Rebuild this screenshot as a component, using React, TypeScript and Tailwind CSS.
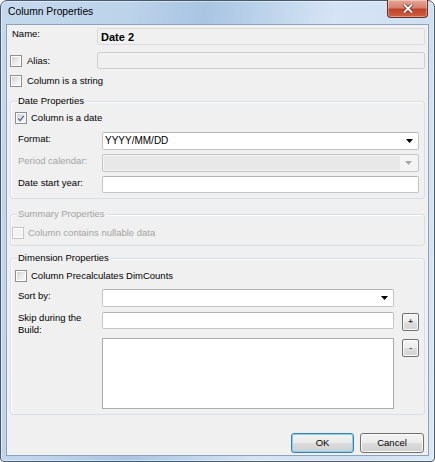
import type { ReactNode } from 'react';

const font = "font-['Liberation_Sans',Arial,sans-serif] text-[9.5px] leading-[12px]";
const label = `${font} text-black`;
const grey = `${font} text-[#a3a3a3]`;

function CheckBox({ checked = false, disabled = false }: { checked?: boolean; disabled?: boolean }) {
  return (
    <span
      className={`flex h-[12px] w-[12px] shrink-0 items-center justify-center border bg-white p-[1px] ${
        disabled ? 'border-[#c4c4c4]' : 'border-[#8e8f8f]'
      }`}
    >
      <span
        className={`relative flex h-full w-full items-center justify-center ${
          disabled ? 'bg-[#f4f4f4]' : 'bg-[linear-gradient(135deg,#cfd2d6_0%,#eeeeee_60%,#f7f7f7_100%)]'
        }`}
      >
        {checked && (
          <svg viewBox="0 0 10 10" className="h-[9px] w-[9px]">
            <path d="M1.6 5.2 L4 7.6 L8.4 1.8" fill="none" stroke="#4a5f97" strokeWidth="1.6" />
          </svg>
        )}
      </span>
    </span>
  );
}

function CheckRow({ text, checked, disabled, gap = 'gap-[4px]' }: { text: string; checked?: boolean; disabled?: boolean; gap?: string }) {
  return (
    <div className={`flex h-[12px] items-center ${gap}`}>
      <CheckBox checked={checked} disabled={disabled} />
      <span className={disabled ? grey : label}>{text}</span>
    </div>
  );
}

function Arrow({ color = '#000' }: { color?: string }) {
  return (
    <svg viewBox="0 0 7 4" className="h-[4px] w-[7px]">
      <path d="M0 0 H7 L3.5 4 Z" fill={color} />
    </svg>
  );
}

function Combo({ width, value, disabled = false }: { width: string; value?: string; disabled?: boolean }) {
  if (disabled) {
    return (
      <div className={`${width} flex h-[18px] rounded-[2px] border border-[#c6c6c6] bg-[#f4f4f4] p-[1px]`}>
        <div className="h-full flex-1 bg-[#e8e8e8]" />
        <div className="flex w-[17px] items-center justify-center">
          <Arrow color="#a9a9a9" />
        </div>
      </div>
    );
  }
  return (
    <div className={`${width} flex h-[18px] items-center rounded-[2px] border border-[#c4c4c4] border-t-[#b4b4b4] bg-white`}>
      <span className="flex-1 pl-[2px] font-['Liberation_Sans',Arial,sans-serif] text-[10px] leading-[12px] text-black">
        {value}
      </span>
      <div className="flex w-[17px] items-center justify-center">
        <Arrow />
      </div>
    </div>
  );
}

function TextBox({ width }: { width: string }) {
  return <div className={`${width} h-[17px] rounded-[2px] border border-[#c4c4c4] border-t-[#b4b4b4] bg-white`} />;
}

function Group({ title, height, disabled = false, children }: { title: string; height: string; disabled?: boolean; children: ReactNode }) {
  return (
    <div className={`relative ${height} w-[415px] rounded-[3px] border border-[#d5dfe5] shadow-[inset_1px_1px_0_#ffffff]`}>
      <span className={`absolute -top-[7px] left-[6px] bg-[#f0f0f0] px-[1px] ${disabled ? grey : label}`}>{title}</span>
      {children}
    </div>
  );
}

function SmallButton({ glyph }: { glyph: string }) {
  return (
    <div className="flex h-[18px] w-[17px] items-center justify-center rounded-[2px] border border-[#707070] bg-[linear-gradient(#f4f4f4_0%,#ececec_50%,#dedede_50%,#d2d2d2_100%)] shadow-[inset_0_0_0_1px_#fbfbfb]">
      <span className="font-['Liberation_Sans',Arial,sans-serif] text-[8px] font-bold leading-[8px] text-[#333]">{glyph}</span>
    </div>
  );
}

function DialogButton({ text, isDefault = false }: { text: string; isDefault?: boolean }) {
  return (
    <div
      className={`flex h-[20px] items-center justify-center rounded-[3px] border bg-[linear-gradient(#f2f2f2_0%,#ebebeb_50%,#dddddd_50%,#cfcfcf_100%)] ${
        isDefault
          ? 'w-[63px] border-[#3c7fb1] shadow-[inset_0_0_0_1px_#7fd3f3]'
          : 'w-[64px] border-[#707070] shadow-[inset_0_0_0_1px_#fbfbfb]'
      }`}
    >
      <span className={label}>{text}</span>
    </div>
  );
}

export default function App() {
  return (
    <div className="h-[462px] w-[435px] bg-white">
      <div className="flex h-full w-full flex-col rounded-t-[7px] rounded-b-[4px] border border-[#4b5a6b] bg-[linear-gradient(100deg,#c5d9ee_0%,#bcd3ea_25%,#a9c5e3_40%,#b9d1ea_50%,#d5e4f4_65%,#cfe0f1_85%,#dbe8f5_100%)] shadow-[inset_0_0_0_1px_rgba(255,255,255,0.45)]">
        {/* Title bar */}
        <div className="flex h-[23px] shrink-0 items-start justify-between">
          <span className="pl-[7px] pt-[5px] font-['Liberation_Sans',Arial,sans-serif] text-[10.3px] leading-[12px] text-black">
            Column Properties
          </span>
          <div className="-mt-px mr-[6px] flex h-[18px] w-[41px] items-center justify-center rounded-b-[4px] border border-t-0 border-[#6b2c22] bg-[linear-gradient(#e5a697_0%,#d5826f_45%,#c0432b_55%,#d0603f_100%)] shadow-[inset_0_0_0_1px_rgba(255,255,255,0.35)]">
            <svg viewBox="0 0 10 9" className="h-[9px] w-[10px]">
              <path d="M1.5 1 L8.5 8 M8.5 1 L1.5 8" stroke="#5a1d14" strokeWidth="3.2" strokeLinecap="square" />
              <path d="M1.5 1 L8.5 8 M8.5 1 L1.5 8" stroke="#ffffff" strokeWidth="1.9" strokeLinecap="square" />
            </svg>
          </div>
        </div>

        {/* Client area */}
        <div className="mx-[5px] flex h-[432px] shrink-0 flex-col overflow-hidden border border-[#8ca3bd] bg-[#f0f0f0] px-[3px]">
          {/* Name */}
          <div className="mt-[3px] flex h-[17px] items-start">
            <span className={`w-[87px] pl-[2px] ${label}`}>Name:</span>
            <div className="flex h-[17px] w-[328px] items-center rounded-[2px] border border-[#dadada] bg-[#f0f0f0] pl-[3px]">
              <span className="font-['Liberation_Sans',Arial,sans-serif] text-[11px] font-bold leading-[12px] text-black">
                Date 2
              </span>
            </div>
          </div>

          {/* Alias */}
          <div className="mt-[7px] flex h-[17px] items-center">
            <div className="flex w-[87px] items-center gap-[5px]">
              <CheckBox />
              <span className={label}>Alias:</span>
            </div>
            <div className="h-[17px] w-[328px] rounded-[2px] border border-[#cfcfcf] bg-[#f0f0f0]" />
          </div>

          {/* Column is a string */}
          <div className="mt-[6px]">
            <CheckRow text="Column is a string" gap="gap-[5px]" />
          </div>

          {/* Date Properties */}
          <div className="mt-[14px]">
            <Group title="Date Properties" height="h-[98px]">
              <div className="flex flex-col pl-[4px]">
                <div className="mt-[10px]">
                  <CheckRow text="Column is a date" checked />
                </div>
                <div className="mt-[8px] flex h-[18px] items-start">
                  <span className={`w-[87px] pl-[3px] pt-[1px] ${label}`}>Format:</span>
                  <Combo width="w-[317px]" value="YYYY/MM/DD" />
                </div>
                <div className="mt-[4px] flex h-[18px] items-start">
                  <span className={`w-[87px] pl-[3px] pt-[1px] ${grey}`}>Period calendar:</span>
                  <Combo width="w-[317px]" disabled />
                </div>
                <div className="mt-[4px] flex h-[17px] items-start">
                  <span className={`w-[87px] pl-[3px] pt-[1px] ${label}`}>Date start year:</span>
                  <TextBox width="w-[317px]" />
                </div>
              </div>
            </Group>
          </div>

          {/* Summary Properties */}
          <div className="mt-[15px]">
            <Group title="Summary Properties" height="h-[32px]" disabled>
              <div className="mt-[12px] pl-[1px]">
                <CheckRow text="Column contains nullable data" disabled />
              </div>
            </Group>
          </div>

          {/* Dimension Properties */}
          <div className="mt-[12px]">
            <Group title="Dimension Properties" height="h-[157px]">
              <div className="flex flex-col pl-[4px]">
                <div className="mt-[11px]">
                  <CheckRow text="Column Precalculates DimCounts" />
                </div>
                <div className="mt-[7px] flex h-[18px] items-start">
                  <span className={`w-[87px] pl-[3px] pt-[1px] ${label}`}>Sort by:</span>
                  <Combo width="w-[292px]" />
                </div>
                <div className="mt-[5px] flex h-[17px] items-start">
                  <span className={`w-[87px] pl-[3px] ${label}`}>
                    Skip during the
                    <br />
                    Build:
                  </span>
                  <TextBox width="w-[292px]" />
                  <div className="ml-[8px] mt-[1px]">
                    <SmallButton glyph="+" />
                  </div>
                </div>
                <div className="mt-[9px] flex items-start">
                  <div className="w-[87px]" />
                  <div className="h-[71px] w-[292px] border border-[#ababab] bg-white" />
                  <div className="ml-[8px] mt-[1px]">
                    <SmallButton glyph="-" />
                  </div>
                </div>
              </div>
            </Group>
          </div>

          {/* Dialog buttons */}
          <div className="mt-[18px] flex justify-end gap-[6px] pr-[1px]">
            <DialogButton text="OK" isDefault />
            <DialogButton text="Cancel" />
          </div>
        </div>
      </div>
    </div>
  );
}
